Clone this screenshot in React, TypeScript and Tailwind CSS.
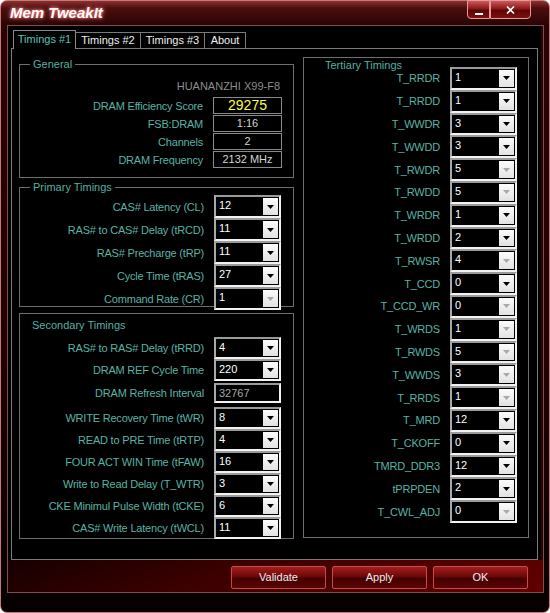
type Row = { label: string; value: string; disabled?: boolean }

const general = [
  { label: 'DRAM Efficiency Score', value: '29275', hot: true },
  { label: 'FSB:DRAM', value: '1:16' },
  { label: 'Channels', value: '2' },
  { label: 'DRAM Frequency', value: '2132 MHz' },
]

const primary: Row[] = [
  { label: 'CAS# Latency (CL)', value: '12' },
  { label: 'RAS# to CAS# Delay (tRCD)', value: '11' },
  { label: 'RAS# Precharge (tRP)', value: '11' },
  { label: 'Cycle Time (tRAS)', value: '27' },
  { label: 'Command Rate (CR)', value: '1', disabled: true },
]

const secondaryTop: Row[] = [
  { label: 'RAS# to RAS# Delay (tRRD)', value: '4' },
  { label: 'DRAM REF Cycle Time', value: '220' },
]

const secondaryBottom: Row[] = [
  { label: 'WRITE Recovery Time (tWR)', value: '8' },
  { label: 'READ to PRE Time (tRTP)', value: '4' },
  { label: 'FOUR ACT WIN Time (tFAW)', value: '16' },
  { label: 'Write to Read Delay (T_WTR)', value: '3' },
  { label: 'CKE Minimul Pulse Width (tCKE)', value: '6' },
  { label: 'CAS# Write Latency (tWCL)', value: '11' },
]

const tertiary: Row[] = [
  { label: 'T_RRDR', value: '1' },
  { label: 'T_RRDD', value: '1' },
  { label: 'T_WWDR', value: '3' },
  { label: 'T_WWDD', value: '3' },
  { label: 'T_RWDR', value: '5', disabled: true },
  { label: 'T_RWDD', value: '5', disabled: true },
  { label: 'T_WRDR', value: '1' },
  { label: 'T_WRDD', value: '2' },
  { label: 'T_RWSR', value: '4', disabled: true },
  { label: 'T_CCD', value: '0' },
  { label: 'T_CCD_WR', value: '0', disabled: true },
  { label: 'T_WRDS', value: '1', disabled: true },
  { label: 'T_RWDS', value: '5', disabled: true },
  { label: 'T_WWDS', value: '3', disabled: true },
  { label: 'T_RRDS', value: '1', disabled: true },
  { label: 'T_MRD', value: '12' },
  { label: 'T_CKOFF', value: '0' },
  { label: 'TMRD_DDR3', value: '12' },
  { label: 'tPRPDEN', value: '2' },
  { label: 'T_CWL_ADJ', value: '0', disabled: true },
]

function Combo({ value, disabled }: { value: string; disabled?: boolean }) {
  return (
    <div className="flex h-full w-[67px] shrink-0 border-2 border-t-[#9a9a9a] border-r-[#f2f2f2] border-b-[#f2f2f2] border-l-[#a8a8a8] bg-black">
      <span className="flex-1 pl-[3px] pt-[1px] text-[11px] leading-[14px] text-white">{value}</span>
      <span className="my-px mr-px flex w-[15px] items-center justify-center bg-[linear-gradient(to_bottom,#fcfcfc,#e2e2e2)]">
        <svg width="7" height="4" viewBox="0 0 7 4">
          <path d="M0 0h7L3.5 4z" fill={disabled ? '#a9a9a9' : '#000'} />
        </svg>
      </span>
    </div>
  )
}

function ComboRow({ row, tall }: { row: Row; tall?: boolean }) {
  return (
    <div className={tall ? 'flex h-[23px] items-center' : 'flex h-[22px] items-center'}>
      <span className="w-[184px] shrink-0 text-right text-[11px] leading-[14px] tracking-[-0.2px] text-[#58b3a5]">{row.label}</span>
      <span className="ml-[10px] h-full">
        <Combo value={row.value} disabled={row.disabled} />
      </span>
    </div>
  )
}

function Legend({ children }: { children: string }) {
  return (
    <div className="-mt-[8px] ml-[10px] w-fit bg-black px-[3px] text-[11px] leading-[14px] text-[#52b0a2]">
      {children}
    </div>
  )
}

function WinButton({ children, wide }: { children: React.ReactNode; wide?: boolean }) {
  return (
    <div
      className={
        (wide ? 'w-[41px] rounded-br-[4px]' : 'w-[23px] rounded-bl-[4px]') +
        ' flex h-[19px] items-center justify-center border border-[#e49a9a] bg-[linear-gradient(to_bottom,#cc5a5a,#8c1818_45%,#5c0505_55%,#7c1010)]'
      }
    >
      {children}
    </div>
  )
}

function ActionButton({ label }: { label: string }) {
  return (
    <button
      type="button"
      className="h-[23px] w-[95px] rounded-[2px] border border-[#c84848] bg-[linear-gradient(to_bottom,#a21e1e,#6e0808_45%,#420000_55%,#5e0404)] text-[11px] text-[#ececec]"
    >
      {label}
    </button>
  )
}

export default function App() {
  return (
    <div className="h-[613px] w-[550px] bg-white font-['Liberation_Sans',Arial,sans-serif]">
      <div className="flex h-full flex-col rounded-[7px] border border-[#c47a7a] bg-[linear-gradient(to_bottom,#8e3030_0px,#4c0e0e_7px,#2a0404_24px,#200000_60%,#050000_100%)]">
        {/* title bar */}
        <div className="flex h-[24px] shrink-0 items-start justify-between pl-[9px] pr-[18px]">
          <span className="pt-[3px] text-[15px] leading-[18px] font-bold italic text-white [text-shadow:0_0_3px_#ff6a6a,0_0_5px_#ff9090]">
            Mem TweakIt
          </span>
          <div className="-mt-px flex">
            <WinButton>
              <span className="mt-[8px] h-[2px] w-[8px] bg-white" />
            </WinButton>
            <WinButton wide>
              <svg width="9" height="8" viewBox="0 0 9 8">
                <path d="M1 0.5L8 7.5M8 0.5L1 7.5" stroke="#fff" strokeWidth="1.6" />
              </svg>
            </WinButton>
          </div>
        </div>

        {/* client */}
        <div className="ml-[6px] flex h-[568px] w-[537px] shrink-0 flex-col border border-[#7c4e4e] bg-[#2c0202]">
          <div className="mr-[2px] flex h-[534px] flex-col bg-black px-[3px] pt-[4px]">
            {/* tabs */}
            <div className="flex h-[18px] items-end pl-[2px] text-[11px]">
              <div className="relative z-10 -mb-px h-[19px] w-[63px] border border-b-0 border-[#8a8a8a] bg-black text-center leading-[17px] text-[#5cc4b4]">
                Timings #1
              </div>
              <div className="h-[16px] w-[65px] border-t border-r border-[#7a7a7a] text-center leading-[15px] text-[#f0f0f0]">
                Timings #2
              </div>
              <div className="h-[16px] w-[64px] border-t border-r border-[#7a7a7a] text-center leading-[15px] text-[#f0f0f0]">
                Timings #3
              </div>
              <div className="h-[16px] w-[41px] border-t border-r border-[#7a7a7a] text-center leading-[15px] text-[#f0f0f0]">
                About
              </div>
            </div>

            {/* tab page */}
            <div className="flex flex-1 border border-[#7a7a7a] pt-[8px] pl-[7px]">
              <div className="flex w-[275px] flex-col pt-[7px]">
                <div className="flex h-[114px] flex-col border border-[#6e6e6e]">
                  <Legend>General</Legend>
                  <div className="mt-[8px] pr-[13px] text-right text-[11px] leading-[14px] text-[#8c8c8c]">
                    HUANANZHI X99-F8
                  </div>
                  <div className="mt-[4px] flex flex-col gap-[1px]">
                    {general.map((g) => (
                      <div key={g.label} className="flex h-[17px] items-center">
                        <span className="w-[183px] text-right text-[11px] leading-[14px] tracking-[-0.2px] text-[#58b3a5]">{g.label}</span>
                        <span
                          className={
                            g.hot
                              ? 'ml-[10px] h-[17px] w-[69px] border border-[#8a8a8a] text-center text-[14px] leading-[15px] text-[#ffff40]'
                              : 'ml-[10px] h-[17px] w-[69px] border border-[#8a8a8a] text-center text-[11px] leading-[15px] text-[#d4d4d4]'
                          }
                        >
                          {g.value}
                        </span>
                      </div>
                    ))}
                  </div>
                </div>

                <div className="mt-[9px] flex h-[120px] flex-col border border-[#6e6e6e]">
                  <Legend>Primary Timings</Legend>
                  <div className="mt-[1px] flex flex-col">
                    {primary.map((r) => (
                      <ComboRow key={r.label} row={r} tall />
                    ))}
                  </div>
                </div>

                <div className="mt-[6px] flex h-[226px] flex-col border border-[#6e6e6e]">
                  <div className="mt-[4px] ml-[12px] text-[11px] leading-[14px] text-[#52b0a2]">Secondary Timings</div>
                  <div className="mt-[5px] flex flex-col">
                    {secondaryTop.map((r) => (
                      <ComboRow key={r.label} row={r} />
                    ))}
                    <div className="mt-[2px] flex h-[20px] items-center">
                      <span className="w-[184px] text-right text-[11px] leading-[14px] tracking-[-0.2px] text-[#58b3a5]">DRAM Refresh Interval</span>
                      <span className="ml-[10px] h-full w-[67px] border-2 border-t-[#9a9a9a] border-r-[#f2f2f2] border-b-[#f2f2f2] border-l-[#a8a8a8] bg-black pl-[3px] text-[11px] leading-[16px] text-[#a8a8a8]">
                        32767
                      </span>
                    </div>
                    <div className="mt-[4px] flex flex-col">
                      {secondaryBottom.map((r) => (
                        <ComboRow key={r.label} row={r} />
                      ))}
                    </div>
                  </div>
                </div>
              </div>

              <div className="ml-[9px] flex h-[481px] w-[226px] flex-col border border-[#6e6e6e]">
                <div className="ml-[21px] pt-[1px] text-[11px] leading-[12px] text-[#52b0a2]">Tertiary Timings</div>
                <div className="-mt-[4px] flex flex-col">
                  {tertiary.map((r) => (
                    <div key={r.label} className="flex h-[22.8px] items-center">
                      <span className="w-[136px] shrink-0 text-right text-[11px] leading-[14px] tracking-[-0.2px] text-[#58b3a5]">{r.label}</span>
                      <span className="ml-[10px] h-full">
                        <Combo value={r.value} disabled={r.disabled} />
                      </span>
                    </div>
                  ))}
                </div>
              </div>
            </div>
          </div>

          {/* buttons */}
          <div className="flex flex-1 items-start justify-end gap-[6px] bg-[linear-gradient(160deg,#160000_0%,#3c0000_40%,#620000_100%)] pt-[6px] pr-[15px]">
            <ActionButton label="Validate" />
            <ActionButton label="Apply" />
            <ActionButton label="OK" />
          </div>
        </div>

        <div className="flex-1" />
      </div>
    </div>
  )
}
